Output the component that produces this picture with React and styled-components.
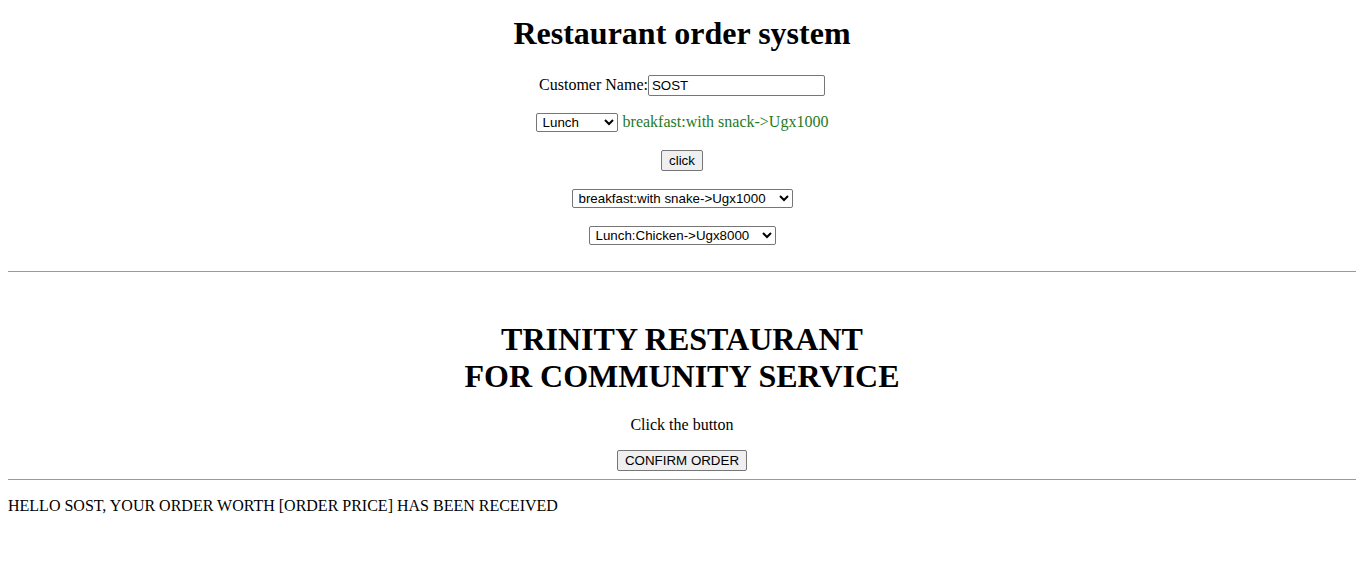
import styled, { createGlobalStyle } from "styled-components";

const GlobalStyle = createGlobalStyle`
  html, body {
    margin: 0;
    background: #fff;
  }
  body {
    font-family: "Liberation Serif", "Times New Roman", serif;
    font-size: 16px;
    color: #000;
  }
`;

const Page = styled.div`
  padding: 0 8px;
`;

const Order = styled.section`
  display: flex;
  flex-direction: column;
  align-items: center;
`;

const Title = styled.h1`
  font-size: 32px;
  font-weight: bold;
  line-height: 37px;
  margin: ${(p) => p.$top || "15px"} 0 0;
  text-align: center;
`;

const Row = styled.div`
  display: flex;
  align-items: center;
  justify-content: center;
  height: 22px;
  margin-top: ${(p) => p.$top || "16px"};
`;

const Label = styled.label`
  line-height: 22px;
`;

const TextInput = styled.input`
  box-sizing: border-box;
  width: 177px;
  height: 21px;
  padding: 1px 3px;
  font-family: "Liberation Sans", Arial, sans-serif;
  font-size: 13.33px;
  border: 1px solid #767676;
  border-radius: 2px;
  color: #000;
`;

const Select = styled.select`
  box-sizing: border-box;
  width: ${(p) => p.$w}px;
  height: 19px;
  padding: 0 0 0 2px;
  font-family: "Liberation Sans", Arial, sans-serif;
  font-size: 13.33px;
  border: 1px solid #767676;
  border-radius: 2px;
  background: #fff;
  color: #000;
`;

const Price = styled.span`
  color: #1f7a1f;
  margin-left: 5px;
`;

const Button = styled.button`
  box-sizing: border-box;
  height: 21px;
  padding: 0 7px;
  font-family: "Liberation Sans", Arial, sans-serif;
  font-size: 13.33px;
  color: #000;
  background: #efefef;
  border: 1px solid #767676;
  border-radius: 2px;
`;

const Rule = styled.hr`
  border: none;
  border-top: 1px solid #9a9a9a;
  margin: ${(p) => p.$top || "25px"} 0 0;
  height: 0;
`;

const Note = styled.p`
  margin: 16px 0 0;
  line-height: 20px;
`;

export default function App() {
  return (
    <Page>
      <GlobalStyle />
      <Order>
        <Title>Restaurant order system</Title>
        <Row $top="22px">
          <Label>Customer Name:</Label>
          <TextInput defaultValue="SOST" />
        </Row>
        <Row $top="15px">
          <Select $w={82} defaultValue="Lunch">
            <option>Breakfast</option>
            <option>Lunch</option>
            <option>Supper</option>
          </Select>
          <Price>breakfast:with snack-&gt;Ugx1000</Price>
        </Row>
        <Row>
          <Button>click</Button>
        </Row>
        <Row>
          <Select $w={221}>
            <option>breakfast:with snake-&gt;Ugx1000</option>
          </Select>
        </Row>
        <Row $top="15px">
          <Select $w={187}>
            <option>Lunch:Chicken-&gt;Ugx8000</option>
          </Select>
        </Row>
      </Order>
      <Rule />
      <Order>
        <Title $top="49px">
          TRINITY RESTAURANT
          <br />
          FOR COMMUNITY SERVICE
        </Title>
        <Row $top="19px">Click the button</Row>
        <Row $top="13px">
          <Button>CONFIRM ORDER</Button>
        </Row>
      </Order>
      <Rule $top="8px" />
      <Note>HELLO SOST, YOUR ORDER WORTH [ORDER PRICE] HAS BEEN RECEIVED</Note>
    </Page>
  );
}
